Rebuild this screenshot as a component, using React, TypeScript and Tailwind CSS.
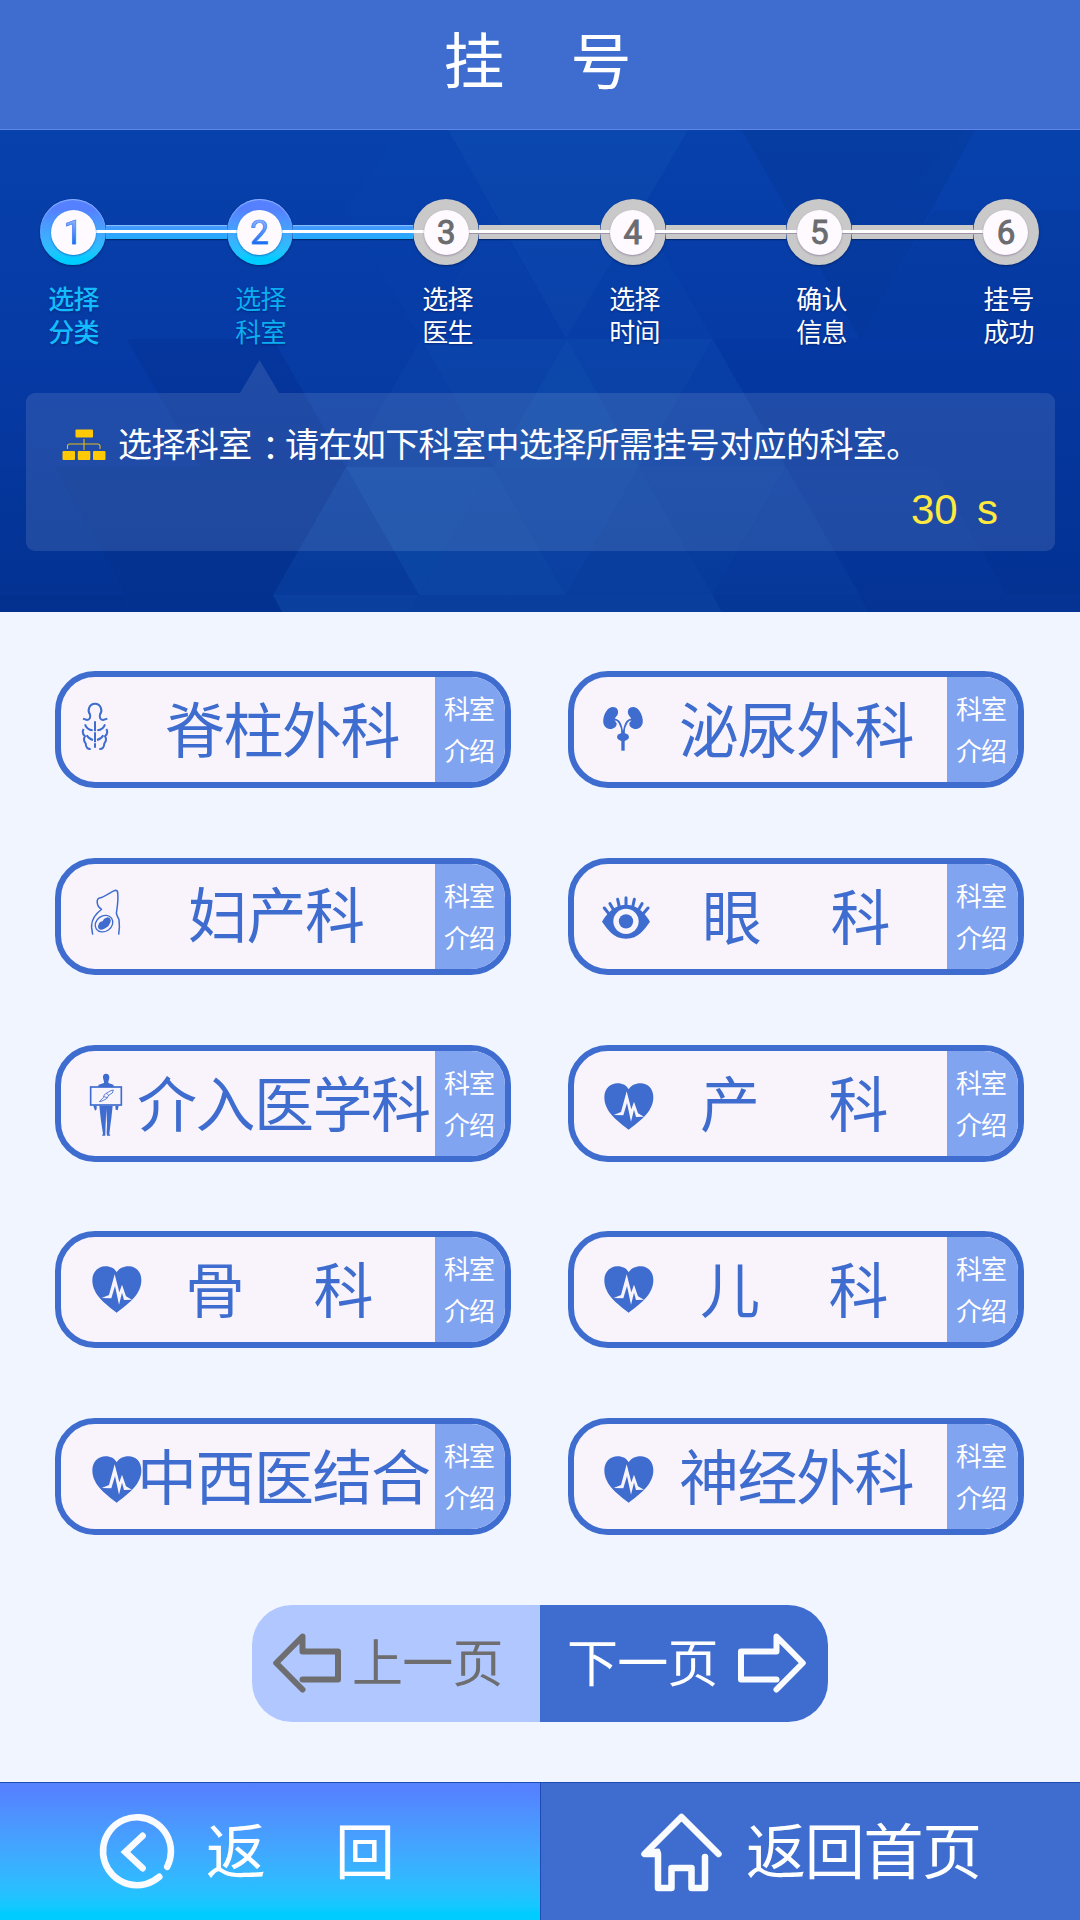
import React from 'react';

type IconKind = 'spine' | 'kidney' | 'belly' | 'eye' | 'body' | 'heart';

type Department = {
  name: string;
  icon: IconKind;
  iconPos: string;
  textPos: string;
};

const leftColumn: Department[] = [
  { name: '脊柱外科', icon: 'spine', iconPos: 'ml-[20px] mt-[25px]', textPos: 'ml-[104px] mt-[12px]' },
  { name: '妇产科', icon: 'belly', iconPos: 'ml-[29px] mt-[25px]', textPos: 'ml-[127px] mt-[10px]' },
  { name: '介入医学科', icon: 'body', iconPos: 'ml-[28px] mt-[22px]', textPos: 'ml-[76px] mt-[12px]' },
  { name: '骨 科', icon: 'heart', iconPos: 'ml-[31px] mt-[29px]', textPos: 'ml-[124px] mt-[12px]' },
  { name: '中西医结合', icon: 'heart', iconPos: 'ml-[31px] mt-[32px]', textPos: 'ml-[76px] mt-[12px]' },
];

const rightColumn: Department[] = [
  { name: '泌尿外科', icon: 'kidney', iconPos: 'ml-[28px] mt-[29px]', textPos: 'ml-[105px] mt-[12px]' },
  { name: '眼 科', icon: 'eye', iconPos: 'ml-[28px] mt-[32px]', textPos: 'ml-[128px] mt-[12px]' },
  { name: '产 科', icon: 'heart', iconPos: 'ml-[30px] mt-[32px]', textPos: 'ml-[126px] mt-[12px]' },
  { name: '儿 科', icon: 'heart', iconPos: 'ml-[30px] mt-[29px]', textPos: 'ml-[126px] mt-[12px]' },
  { name: '神经外科', icon: 'heart', iconPos: 'ml-[30px] mt-[32px]', textPos: 'ml-[105px] mt-[12px]' },
];

const BLUE = '#3e6ccf';

function SpineIcon() {
  return (
    <svg className="h-[49px] w-[28px]" viewBox="123 126 84 147" fill="none" stroke={BLUE} strokeWidth="6">
      <path d="M129 176L141 180C150 180 152 171 150 163C142 154 146 131 165 131C184 131 188 154 180 163C178 171 180 180 189 180L202 176" />
      <path d="M165 184V263" strokeDasharray="30 3" />
      <path d="M135 193Q140 209 158 211M195 193Q190 209 172 211M140 226Q146 237 159 240M190 226Q184 237 171 240" />
      <path d="M131 207Q124 219 135 229Q128 240 137 250Q138 268 152 267M199 207Q206 219 195 229Q202 240 193 250Q192 268 178 267" />
    </svg>
  );
}

function BellyIcon() {
  return (
    <svg className="h-[47px] w-[31px]" viewBox="150 687 93 141" fill="none" stroke={BLUE} strokeWidth="4.500">
      <path d="M184 747C168 738 170 718 176 715C195 712 212 695 226 691Q233 691 233 698C236 720 232 740 229 760Q232 770 237 779Q240 800 236 824" />
      <path d="M186 747Q152 772 155 803L158 824" />
      <ellipse cx="192" cy="791" rx="28" ry="23" transform="rotate(-35 192 791)" strokeWidth="4" />
      <path d="M175 795Q178 785 188 784Q190 775 203 772Q214 774 212 785Q208 798 197 804Q184 813 176 806Q172 800 175 795Z" fill={BLUE} stroke="none" />
    </svg>
  );
}

function BodyIcon() {
  return (
    <svg className="h-[63px] w-[34px]" viewBox="147 130 102 189" fill={BLUE}>
      <path d="M198 132C205 132 209 138 208 145L205 156V160L220 165L222 172H174L176 165L192 160V156L189 145C188 138 191 132 198 132Z" />
      <rect x="152" y="172" width="92" height="54" fill="#f8f4fb" stroke={BLUE} strokeWidth="5" />
      <path d="M178 216L190 204L193 195L210 184L220 181L217 190L206 197L200 207L186 214ZM191 201L203 204M199 190L207 198" fill="none" stroke={BLUE} strokeWidth="2.500" />
      <path d="M160 228H170V239L165 243ZM226 228H236L233 242L227 240ZM178 228H218L214 266L212 280L208 312L211 318H201L200 310L201 282L199 238L197 282L196 310V318H186L189 312L184 280L182 266Z" />
    </svg>
  );
}

function HeartIcon() {
  return (
    <svg className="h-[47px] w-[50px]" viewBox="155 707 150 141">
      <path
        d="M229 847C200 825 156 795 156 750C156 722 176 708 195 708C212 708 223 715 229 726C236 715 248 708 265 708C285 708 303 722 303 750C303 795 258 825 229 847Z"
        fill={BLUE}
      />
      <path
        d="M184 803L206 794L223 732L237 786L245 763L257 798L275 808L251 809L245 787L236 823L224 767L213 804Z"
        fill="#f8f4fb"
      />
    </svg>
  );
}

function EyeIcon() {
  return (
    <svg className="h-[43px] w-[48px]" viewBox="156 707 144 129" fill={BLUE}>
      <path d="M156 784C168 764 190 733 228 733C266 733 288 764 300 784C284 806 266 835 228 835C190 835 172 806 156 784Z" />
      <circle cx="228" cy="783" r="38" fill="#f8f4fb" />
      <circle cx="228" cy="783" r="21.500" />
      <path
        d="M228 736V712M208 740L203 717M248 740L253 717M192 751L180 730M264 751L276 730M178 762L163 743M278 762L294 743"
        stroke={BLUE}
        strokeWidth="9"
        strokeLinecap="round"
      />
    </svg>
  );
}

function KidneyIcon() {
  return (
    <svg className="h-[45px] w-[42px]" viewBox="156 139 126 135" fill={BLUE}>
      <path d="M187 142C199 141 206 150 204 161C202 170 195 172 194 179C193 186 201 187 200 194C198 205 187 209 178 208C164 206 158 193 160 179C162 162 173 143 187 142Z" />
      <path d="M251 142C239 141 232 150 234 161C236 170 243 172 244 179C245 186 237 187 238 194C240 205 251 209 260 208C274 206 280 193 278 179C276 162 265 143 251 142Z" />
      <path d="M192 179Q213 179 217 220M246 179Q225 179 221 220" fill="none" stroke={BLUE} strokeWidth="5" />
      <ellipse cx="219" cy="232" rx="18" ry="12" />
      <rect x="214" y="213" width="10" height="60" />
    </svg>
  );
}

const icons: Record<IconKind, () => React.ReactElement> = {
  spine: SpineIcon,
  kidney: KidneyIcon,
  belly: BellyIcon,
  eye: EyeIcon,
  body: BodyIcon,
  heart: HeartIcon,
};

function DepartmentButton({ dept, main }: { dept: Department; main: string }) {
  const Icon = icons[dept.icon];
  const [first, second] = dept.name.split(' ');
  return (
    <div className="flex h-[117px] w-[456px] overflow-hidden rounded-[40px] border-[6px] border-[#3e6ccf] bg-[#f9f4fb]">
      <div className={`grid shrink-0 items-start justify-items-start ${main}`}>
        <div className={`[grid-area:1/1] ${dept.iconPos}`}>
          <Icon />
        </div>
        <div
          className={`flex gap-[70px] whitespace-nowrap text-[60px] leading-[76px] tracking-[-1.500px] text-[#3e6ccf] [grid-area:1/1] ${dept.textPos}`}
        >
          <span>{first}</span>
          {second && <span>{second}</span>}
        </div>
      </div>
      <div className="flex-1 whitespace-pre-line bg-[#81a4f1] pl-[9px] pt-[10px] text-[26px] leading-[42px] tracking-[-1px] text-white">
        {'科室\n介绍'}
      </div>
    </div>
  );
}

const steps = [
  { n: '1', label: '选择\n分类', style: 'font-medium text-[#14bcff]' },
  { n: '2', label: '选择\n科室', style: 'text-[#0aaef2]' },
  { n: '3', label: '选择\n医生', style: 'text-white' },
  { n: '4', label: '选择\n时间', style: 'text-white' },
  { n: '5', label: '确认\n信息', style: 'text-white' },
  { n: '6', label: '挂号\n成功', style: 'text-white' },
];

function Stepper() {
  return (
    <div className="pl-[40px] pr-[41px] pt-[69px]">
      <div className="flex items-center">
        {steps.map((s, i) => {
          const active = i < 2;
          return (
            <React.Fragment key={s.n}>
              <div
                className={`grid size-[66px] shrink-0 place-items-center rounded-full ${
                  active
                    ? 'bg-linear-to-b from-[#5580ff] from-15% to-[#00ccff] to-90% shadow-[inset_0_1px_1px_#8fb4ff,0_1px_2px_#04276e]'
                    : 'bg-[#c9c9c9] shadow-[0_1px_2px_#04276e]'
                }`}
              >
                <div
                  className={`z-20 grid size-[45px] place-items-center rounded-full bg-[#fefaff] font-['Roboto'] text-[33px] leading-none ${
                    active ? 'shadow-[0_1px_2px_#1479c8]' : 'shadow-[0_1px_2px_#9a8ca5]'
                  }`}
                >
                  <span
                    className={
                      active
                        ? 'bg-linear-to-b from-[#8fb0ff] from-15% to-[#0869ee] to-85% bg-clip-text text-transparent [-webkit-text-stroke:0.7px_#3f86f6]'
                        : 'text-[#6b6c70] [-webkit-text-stroke:1px_#6b6c70]'
                    }
                  >
                    {s.n}
                  </span>
                </div>
              </div>
              {i < 5 && (
                <div
                  className={`relative h-[14px] flex-1 ${
                    active
                      ? 'bg-linear-to-b from-[#4495ff] to-[#1eacff] shadow-[inset_0_1px_1px_#8ec0ff,0_1px_1px_#04276e]'
                      : 'bg-[#c9c9c9] shadow-[0_1px_1px_#04276e]'
                  }`}
                >
                  <div
                    className={`absolute -left-[11px] -right-[11px] top-[5px] z-10 h-[3px] bg-white ${
                      active ? '' : 'shadow-[0_1px_0_#9f93a8]'
                    }`}
                  />
                </div>
              )}
            </React.Fragment>
          );
        })}
      </div>
      <div className="-mr-[3px] flex justify-between pt-[16px]">
        {steps.map((s) => (
          <div
            key={s.n}
            className={`w-[67px] whitespace-pre-line text-center text-[26px] leading-[33px] tracking-[-0.700px] [text-shadow:0_1px_2px_rgba(0,20,80,0.5)] ${s.style}`}
          >
            {s.label}
          </div>
        ))}
      </div>
    </div>
  );
}

function Facets() {
  return (
    <svg className="absolute inset-0 h-full w-full" viewBox="0 130 1080 482" preserveAspectRatio="none">
      <defs>
        <linearGradient id="sky" x1="0" y1="0" x2="0" y2="1">
          <stop offset="0" stopColor="#0741ab" />
          <stop offset="0.45" stopColor="#063aa5" />
          <stop offset="1" stopColor="#043394" />
        </linearGradient>
      </defs>
      <rect x="0" y="130" width="1080" height="482" fill="url(#sky)" />
      <g fill="#1d6ac0">
        <path d="M448 130L688 130L566 339Z" opacity="0.16" />
        <path d="M400 130H448L493 211L421 339L346 211Z" opacity="0.05" />
        <path d="M493 211L566 339H421Z" opacity="0.06" />
        <path d="M639 211L713 339H566Z" opacity="0.08" />
        <path d="M273 339H421L346 467Z" opacity="0.06" />
        <path d="M421 339L346 467H493Z" opacity="0.12" />
        <path d="M421 339H567L493 467Z" opacity="0.2" />
        <path d="M567 339L493 467H639Z" opacity="0.28" />
        <path d="M567 339H713L639 467Z" opacity="0.2" />
        <path d="M713 339L639 467H786Z" opacity="0.1" />
        <path d="M346 467L273 595H419Z" opacity="0.14" />
        <path d="M346 467H493L419 595Z" opacity="0.32" />
        <path d="M493 467L419 595H566Z" opacity="0.3" />
        <path d="M493 467H639L566 595Z" opacity="0.26" />
        <path d="M639 467L566 595H713Z" opacity="0.2" />
        <path d="M639 467H786L713 595Z" opacity="0.14" />
        <path d="M786 467L713 595H860Z" opacity="0.1" />
        <path d="M273 595H419L410 612H282Z" opacity="0.24" />
        <path d="M419 595H713L722 612H410Z" opacity="0.22" />
        <path d="M713 595H860L868 612H722Z" opacity="0.08" />
        <path d="M890 211L963 130H1080V211Z" opacity="0.05" />
      </g>
      <g fill="#02246f">
        <path d="M742 130H975L860 339Z" opacity="0.13" />
        <path d="M933 211L860 339H1080V211Z" opacity="0.07" />
        <path d="M127 339H273L346 467H200Z" opacity="0.15" />
        <path d="M55 467H346L273 595H127Z" opacity="0.13" />
        <path d="M0 467H55L127 595L118 612H0Z" opacity="0.05" />
        <path d="M786 467L713 339H1080V467Z" opacity="0.06" />
        <path d="M933 467L1007 595H1080V467Z" opacity="0.06" />
        <path d="M0 595H273L282 612H0Z" opacity="0.1" />
      </g>
    </svg>
  );
}

function Prompt() {
  return (
    <div className="mt-[13px] pl-[26px] pr-[25px]">
      <div className="pl-[214px]">
        <svg className="block h-[33px] w-[39px]" viewBox="0 0 39 33">
          <path d="M19.500 0L39 33H0Z" fill="#fff" opacity="0.11" />
        </svg>
      </div>
      <div className="h-[158px] rounded-[9px] bg-white/11">
        <div className="flex items-start pl-[36px]">
          <svg className="mt-[36px] h-[32px] w-[44px]" viewBox="0 0 44 32">
            <g fill="#ffca05">
              <rect x="13.500" y="0.500" width="17.500" height="8" rx="1" />
              <rect x="0.500" y="22" width="12.500" height="9" rx="1" />
              <rect x="15.800" y="22" width="12.500" height="9" rx="1" />
              <rect x="31" y="22" width="12.500" height="9" rx="1" />
            </g>
            <path d="M22 10V21M5.500 20V17Q5.500 15 8 15H35.500Q38 15 38 17V20" fill="none" stroke="#e5b91a" strokeWidth="1.100" />
          </svg>
          <div className="ml-[12px] mt-[25px] whitespace-nowrap text-[34px] leading-[50px] tracking-[-0.600px] text-white">
            选择科室
            <span className="inline-block translate-x-[2px] translate-y-[4px] font-['Noto_Sans_CJK_TC']">：</span>
            请在如下科室中选择所需挂号对应的科室。
          </div>
        </div>
        <div className="mt-[18px] flex justify-end whitespace-pre pr-[57px] font-['Liberation_Sans'] text-[42px] leading-[48px] text-[#ffe93f] [word-spacing:-2px]">
          {'30  s'}
        </div>
      </div>
    </div>
  );
}

function ArrowIcon({ className }: { className: string }) {
  return (
    <svg className={className} viewBox="0 0 68 60" fill="none" strokeWidth="6" strokeLinecap="round" strokeLinejoin="round">
      <path d="M29.500 46.500H65V18.500H29.500V3.500L3.200 30L29.500 56.500" />
    </svg>
  );
}

export default function App() {
  return (
    <div className="flex h-[1920px] w-[1080px] flex-col overflow-hidden bg-[#f0f5ff] font-['Noto_Sans_CJK_SC',sans-serif]">
      <header className="flex h-[130px] shrink-0 justify-center border-b border-[#5f86e6] bg-[#3e6ccf] pr-[6px] text-[61px] leading-[115px] text-white">
        <span className="w-[127px]">挂</span>
        <span className="w-[60px]">号</span>
      </header>

      <section className="relative h-[482px] shrink-0">
        <Facets />
        <div className="relative">
          <Stepper />
          <Prompt />
        </div>
      </section>

      <main className="flex flex-1 flex-col items-center">
        <div className="flex w-full gap-[57px] pl-[55px] pt-[59px]">
          <div className="flex flex-col gap-[69.750px]">
            {leftColumn.map((d) => (
              <DepartmentButton key={d.name} dept={d} main="w-[374px]" />
            ))}
          </div>
          <div className="flex flex-col gap-[69.750px]">
            {rightColumn.map((d) => (
              <DepartmentButton key={d.name} dept={d} main="w-[373px]" />
            ))}
          </div>
        </div>
        <div className="mt-[70px] flex h-[117px] w-[576px] overflow-hidden rounded-[40px] text-[51px] leading-[110px] tracking-[-0.700px]">
          <div className="flex w-[288px] bg-[#b1c7ff] pl-[21px] text-[#6e6e71]">
            <ArrowIcon className="mt-[28px] h-[60px] w-[68px] stroke-[#6e6e71]" />
            <span className="ml-[11px] whitespace-nowrap">上一页</span>
          </div>
          <div className="flex w-[288px] bg-[#3e6ccf] pl-[27px] text-white">
            <span className="w-[171px] whitespace-nowrap">下一页</span>
            <ArrowIcon className="mt-[28px] h-[60px] w-[68px] -scale-x-100 stroke-[#fafbff]" />
          </div>
        </div>
      </main>

      <footer className="flex h-[138px] shrink-0 border-t border-[#1c4bb4] text-[60px] leading-[130px] text-white">
        <div className="flex w-[540px] bg-linear-to-b from-[#5482ff] from-5% to-[#00ccff] to-95% pl-[99px]">
          <svg className="mt-[31px] size-[75px] overflow-visible" viewBox="0 0 74 74" fill="none" stroke="#f9fbff" strokeLinecap="round">
            <path d="M67.300 52A33.500 33.500 0 1 0 59.500 62" strokeWidth="6.500" />
            <path d="M43 21.500L26 37.500L43 53.500" strokeWidth="6.500" strokeLinejoin="miter" />
          </svg>
          <span className="ml-[32px] w-[129px]">返</span>
          <span>回</span>
        </div>
        <div className="flex w-[540px] border-l border-[#1c4bb4] bg-[#3e6ccf] pl-[100px]">
          <svg className="mt-[30px] h-[79px] w-[81px]" viewBox="0 0 81 79" fill="none" stroke="#f9fbff" strokeWidth="6.500" strokeLinecap="round" strokeLinejoin="round">
            <path d="M77.500 41L40.500 4L3.500 41H17V75H30.500V55H50.500V75H64V44" />
            <path d="M8 39L17 38" strokeWidth="5" />
          </svg>
          <span className="ml-[24px] whitespace-nowrap tracking-[-1.300px]">返回首页</span>
        </div>
      </footer>
    </div>
  );
}
